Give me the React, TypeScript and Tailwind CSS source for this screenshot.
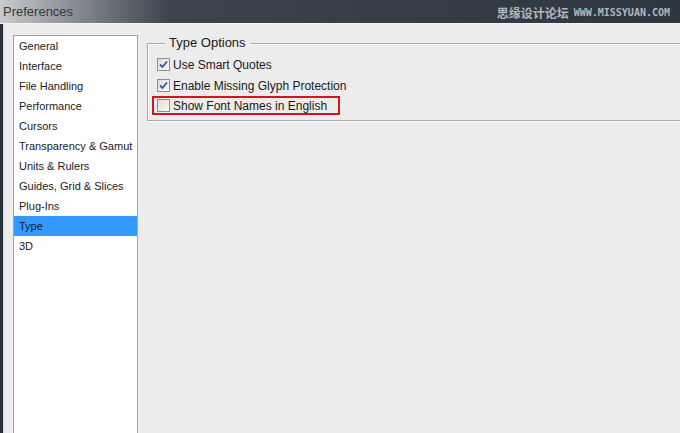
import React from "react";

const sections = [
  "General",
  "Interface",
  "File Handling",
  "Performance",
  "Cursors",
  "Transparency & Gamut",
  "Units & Rulers",
  "Guides, Grid & Slices",
  "Plug-Ins",
  "Type",
  "3D",
];

function Checkbox({ checked }: { checked: boolean }) {
  return (
    <span className="flex h-[13px] w-[13px] shrink-0 items-center justify-center border border-[#8f8f8f] bg-gradient-to-br from-[#dcdcdc] to-[#fafafa]">
      {checked && (
        <svg width="9" height="9" viewBox="0 0 9 9">
          <path d="M1 4.5 L3.5 7 L8 1.5" fill="none" stroke="#3a4fa8" strokeWidth="1.8" />
        </svg>
      )}
    </span>
  );
}

export default function App() {
  const selected = "Type";

  return (
    <div
      className="flex h-[433px] w-[680px] flex-col overflow-hidden bg-[#2b333d]"
      style={{ fontFamily: "'Liberation Sans', Arial, sans-serif" }}
    >
      {/* title bar */}
      <div className="flex h-[23px] items-center justify-between bg-gradient-to-r from-[#c9cbcd] via-[#3c444e] via-[25%] to-[#2d3540] pl-[3px] pr-[10px]">
        <span className="whitespace-nowrap text-[13px] text-[#3a3a3a]">Preferences</span>
        <div className="flex items-center gap-[5px] pt-[2px] text-[#b4b7bb]">
          <span className="whitespace-nowrap text-[12px] font-bold" style={{ fontFamily: "'Noto Sans CJK SC', sans-serif" }}>
            思缘设计论坛
          </span>
          <span className="whitespace-nowrap text-[10px] font-bold" style={{ fontFamily: "'DejaVu Sans Mono', monospace" }}>
            WWW.MISSYUAN.COM
          </span>
        </div>
      </div>
      <div className="h-px bg-[#f4f4f4]" />

      {/* window body */}
      <div className="flex min-h-0 flex-1 border-l-[3px] border-[#27303a]">
        <div className="flex flex-1 border-l border-[#dadada] bg-[#ececec] pl-[9px] pt-[11px]">
          {/* section list */}
          <div className="w-[125px] shrink-0 border border-[#a3a3a3] bg-white" style={{ height: 420 }}>
            {sections.map((s) => (
              <div
                key={s}
                className={
                  "flex h-[20px] items-center whitespace-nowrap pl-[5px] text-[11px] text-[#1a1a1a] " +
                  (s === selected ? "bg-[#3399ff]" : "")
                }
              >
                {s}
              </div>
            ))}
          </div>

          {/* options */}
          <div className="flex-1 pl-[9px] pt-[8px]">
            <div className="relative -mr-[4px] h-[78px] border border-[#a9a9a9] shadow-[inset_1px_1px_0_#ffffff,1px_1px_0_#ffffff]">
              <span className="absolute left-[17px] top-[-9px] whitespace-nowrap bg-[#ececec] px-[4px] text-[13px] leading-[16px] text-[#1a1a1a]">
                Type Options
              </span>
              <div className="flex flex-col pl-[4px] pt-[10px] text-[12px] text-[#1a1a1a]">
                <label className="flex h-[21px] items-center gap-[3px] whitespace-nowrap pl-[5px]">
                  <Checkbox checked />
                  Use Smart Quotes
                </label>
                <label className="flex h-[21px] items-center gap-[3px] whitespace-nowrap pl-[5px]">
                  <Checkbox checked />
                  Enable Missing Glyph Protection
                </label>
                <label className="flex h-[19px] w-[188px] items-center gap-[3px] whitespace-nowrap border-2 border-[#d2161b] pl-[3px]">
                  <Checkbox checked={false} />
                  Show Font Names in English
                </label>
              </div>
            </div>
          </div>
        </div>
      </div>
    </div>
  );
}
